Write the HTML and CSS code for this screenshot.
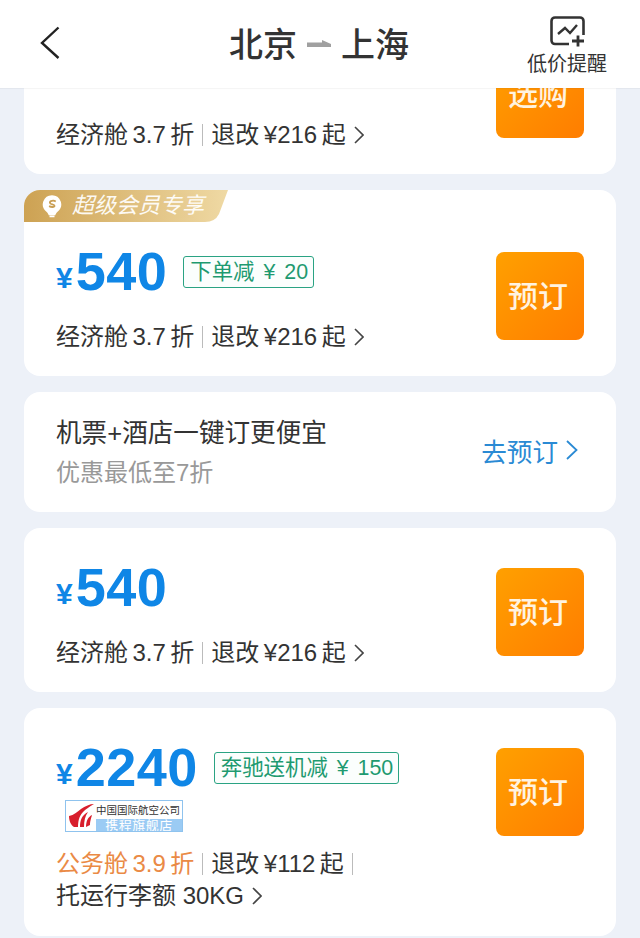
FILE: index.html
```html
<!DOCTYPE html>
<html lang="zh-CN">
<head>
<meta charset="utf-8">
<title>北京 上海</title>
<link rel="stylesheet" href="styles.css">
</head>
<body>
<div class="page">
  <header class="topbar">
    <svg class="back" width="24" height="36" viewBox="0 0 24 36"><path d="M20.500 2.500 L4 18 L20.500 33" fill="none" stroke="#222" stroke-width="2.400"/></svg>
    <div class="route">
      <span>北京</span>
      <svg class="arrow" width="24" height="10" viewBox="0 0 24 10"><path d="M0 3.500h15V1l9 4v3H0z" fill="#a0a0a0"/></svg>
      <span>上海</span>
    </div>
    <div class="alert">
      <svg width="36" height="31" viewBox="0 0 36 31"><path d="M20 28H6a3.500 3.500 0 0 1-3.500-3.500V5A3.500 3.500 0 0 1 6 1.500h25A3.500 3.500 0 0 1 34.500 5V19" fill="none" stroke="#333" stroke-width="2.600"/><path d="M9 18l7-6 5 5 7-8" fill="none" stroke="#333" stroke-width="2.400"/><path d="M23 25h12M29 19.500v11" stroke="#333" stroke-width="2.800"/></svg>
      <span>低价提醒</span>
    </div>
  </header>
  <main class="list">
    <section class="card">
      <div class="info">
        <div class="price-row"></div>
        <div class="desc"><span>经济舱 3.7 折</span><i class="sep"></i><span>退改 ¥216 起</span><svg class="chev" width="10" height="18" viewBox="0 0 10 18"><path d="M1 1l8 8-8 8" fill="none" stroke="#444" stroke-width="1.600"/></svg></div>
      </div>
      <button class="book">选购</button>
    </section>

    <section class="card card-vip">
      <div class="vip">
        <svg width="20" height="24" viewBox="0 0 24 28"><path d="M12 1a11 11 0 0 1 7 19.500c-2 1.500-2.500 3-3 4.500H8c-.5-1.500-1-3-3-4.500A11 11 0 0 1 12 1z" fill="#fff"/><path d="M9 26.500h6" stroke="#fff" stroke-width="2"/><path d="M16.500 8.500c-2.500-1.500-7.500-1-7 1.700.4 2.300 5.500 1.300 5.500 3.500 0 2-4 1.800-6.500.5" fill="none" stroke="#c99f55" stroke-width="2.200"/></svg>
        <em>超级会员专享</em>
      </div>
      <div class="info">
        <div class="price-row"><span class="price"><small>¥</small>540</span><span class="promo">下单减 ¥ 20</span></div>
        <div class="desc"><span>经济舱 3.7 折</span><i class="sep"></i><span>退改 ¥216 起</span><svg class="chev" width="10" height="18" viewBox="0 0 10 18"><path d="M1 1l8 8-8 8" fill="none" stroke="#444" stroke-width="1.600"/></svg></div>
      </div>
      <button class="book">预订</button>
    </section>

    <section class="card card-bundle">
      <div class="bundle-text">
        <div class="bundle-title">机票+酒店一键订更便宜</div>
        <div class="bundle-sub">优惠最低至7折</div>
      </div>
      <a class="bundle-link">去预订<svg width="12" height="20" viewBox="0 0 12 20"><path d="M1 1l9.500 9L1 19" fill="none" stroke="#2a8ad4" stroke-width="1.800"/></svg></a>
    </section>

    <section class="card">
      <div class="info">
        <div class="price-row"><span class="price"><small>¥</small>540</span></div>
        <div class="desc"><span>经济舱 3.7 折</span><i class="sep"></i><span>退改 ¥216 起</span><svg class="chev" width="10" height="18" viewBox="0 0 10 18"><path d="M1 1l8 8-8 8" fill="none" stroke="#444" stroke-width="1.600"/></svg></div>
      </div>
      <button class="book">预订</button>
    </section>

    <section class="card">
      <div class="info">
        <div class="price-row"><span class="price"><small>¥</small>2240</span><span class="promo">奔驰送机减 ¥ 150</span></div>
        <div class="airline">
          <svg width="30" height="30" viewBox="0 0 30 30"><path d="M3 15C8 14 11 11 15 8 19 5 24 3 28 3 23 6 20 8 18 10 14 14 12 18 12 26H8C5 24 3 20 3 15z" fill="#d81e2c"/><path d="M14 26C14 19 16 14 22 11 19 15 18 20 18 26zM20 26C20 20 22 16 26 14 26 15 24 19 24 24z" fill="#d81e2c"/></svg>
          <div class="airline-text"><span class="airline-name">中国国际航空公司</span><span class="airline-store">携程旗舰店</span></div>
        </div>
        <div class="desc desc-wrap"><span class="orange">公务舱 3.9 折</span><i class="sep"></i><span>退改 ¥112 起</span><i class="sep"></i><span class="line2">托运行李额 30KG<svg class="chev" width="10" height="18" viewBox="0 0 10 18"><path d="M1 1l8 8-8 8" fill="none" stroke="#444" stroke-width="1.600"/></svg></span></div>
      </div>
      <button class="book">预订</button>
    </section>
  </main>
</div>
</body>
</html>
```
FILE: styles.css
```css
* { box-sizing: border-box; }
html, body { margin: 0; padding: 0; }
body {
  background: #edf1f8;
  font-family: "Liberation Sans", "Noto Sans CJK SC", sans-serif;
  color: #333;
}
.page { width: 640px; height: 938px; overflow: hidden; display: flex; flex-direction: column; }
.topbar {
  height: 88px;
  flex: none;
  background: #fff;
  display: grid;
  grid-template-columns: 1fr auto 1fr;
  align-items: center;
  padding: 0 33px 0 31px;
  position: relative;
  z-index: 1;
  box-shadow: 0 1px 1px rgba(0,0,0,.04);
}
.back { margin: -3px 0 0 7px; }
.route { display: flex; align-items: center; gap: 10px; font-size: 34px; font-weight: 500; color: #333; margin-top: -4px; }
.arrow { margin-top: 4px; }
.alert { justify-self: end; align-self: start; display: flex; flex-direction: column; align-items: center; gap: 4px; font-size: 20px; line-height: 26px; padding-top: 16px; }
.list { flex: 1; min-height: 0; margin: -78px 24px 0; display: flex; flex-direction: column; gap: 16px; }
.card {
  background: #fff;
  border-radius: 16px;
  padding: 40px 32px 22px;
  display: flex;
  justify-content: space-between;
  align-items: flex-start;
  position: relative;
  flex: none;
}
.card-vip { padding-top: 62px; }
.vip {
  position: absolute;
  left: 0;
  top: 0;
  width: 204px;
  height: 32px;
  background: linear-gradient(90deg, #cda253, #efd9a4);
  clip-path: path("M0 32V16A16 16 0 0 1 16 0H204L195 24Q191 32 181 32Z");
  display: flex;
  align-items: center;
  padding-left: 18px;
  gap: 10px;
}
.vip em { color: #fff; font-size: 22px; line-height: 32px; font-style: italic; opacity: .92; }
.price-row { display: flex; align-items: flex-start; height: 42px; gap: 16px; }
.price { color: #0f86e6; font-size: 54px; font-weight: 700; line-height: 38px; letter-spacing: .5px; white-space: nowrap; }
.price small { font-size: 30px; margin-right: 3px; vertical-align: 2px; letter-spacing: 0; }
.promo {
  border: 1px solid #2aa383;
  border-radius: 3px;
  color: #1e9a70;
  font-size: 21.400px;
  word-spacing: 3px;
  height: 32px;
  line-height: 30px;
  padding: 0 5px 0 6px;
  margin-top: 4px;
  background: #fbfefd;
  white-space: nowrap;
}
.desc { margin-top: 26px; font-size: 24px; line-height: 34px; word-spacing: -2.200px; display: flex; align-items: center; flex-wrap: wrap; width: 320px; white-space: nowrap; }
.sep { width: 1px; height: 22px; background: #bbb; margin: 0 8px; }
.chev { margin-left: 8px; }
.orange { color: #ea8a45; }
.line2 { flex-basis: 100%; display: flex; align-items: center; word-spacing: 0; }
.desc-wrap { margin: 16px 0 2px; line-height: 32px; }
.airline {
  margin: 10px 0 0 9px;
  width: 118px;
  height: 32px;
  background: #fff;
  border: 1px solid #8fc3ee;
  display: flex;
  overflow: hidden;
}
.airline svg { flex: none; }
.airline-text { flex: 1; min-width: 0; display: flex; flex-direction: column; }
.airline-name { font-size: 10.500px; line-height: 18px; color: #333; white-space: nowrap; }
.airline-store { background: #9bcbf4; color: #fff; font-size: 13px; line-height: 13px; text-align: center; letter-spacing: .5px; }
.book {
  flex: none;
  width: 88px;
  height: 88px;
  margin-bottom: 14px;
  border: 0;
  border-radius: 8px;
  background: linear-gradient(135deg, #ffa000, #ff7d00);
  color: #fff3e0;
  font: 500 30px "Noto Sans CJK SC", sans-serif;
  padding: 0 4px 5px 0;
}
.card-bundle { padding: 22px 32px 20px; align-items: center; }
.bundle-title { font-size: 25.600px; line-height: 39px; color: #333; }
.bundle-sub { font-size: 24px; line-height: 39px; color: #999; }
.bundle-link { display: flex; align-items: center; gap: 8px; color: #2a8ad4; font-size: 25.600px; margin: -6px 6px 0 0; }
```
